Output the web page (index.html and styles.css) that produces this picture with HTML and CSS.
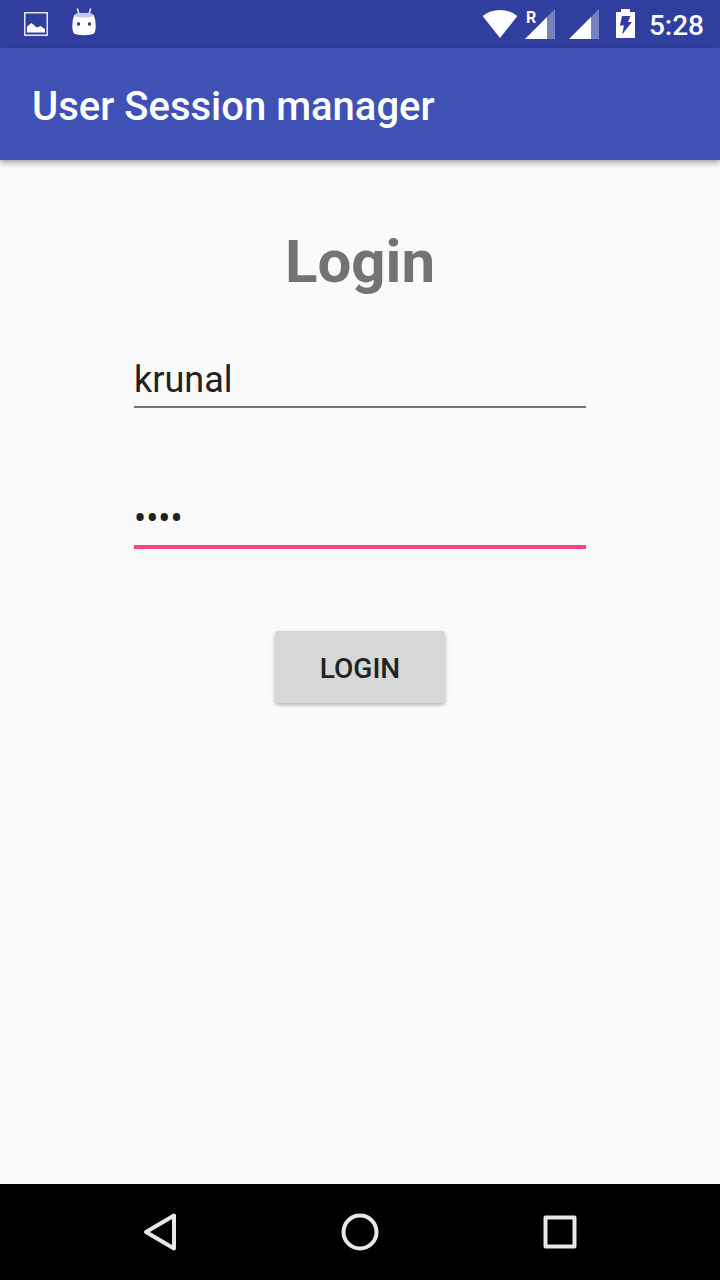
FILE: index.html
```html
<!DOCTYPE html>
<html lang="en">
<head>
<meta charset="utf-8">
<meta name="viewport" content="width=device-width, initial-scale=1">
<title>User Session manager</title>
<link rel="stylesheet" href="styles.css">
</head>
<body>
<div class="status-bar">
  <div class="notifications">
    <svg class="status-icon" width="24" height="40" viewBox="0 0 24 40" aria-hidden="true">
      <rect x="0.75" y="8.750" width="22.500" height="22.500" fill="none" stroke="#e4e6f4" stroke-width="1.500"/>
      <path d="M3 28.500v-6l4.500-3.500 4 3.500 1.500 1 3.500-1.500 4.500 3v3.500z" fill="#fff"/>
    </svg>
    <svg class="status-icon" width="24" height="40" viewBox="0 0 24 40" aria-hidden="true">
      <path d="M5.500 5l1.500 5M18.500 5l-1.500 5" stroke="#e8eaf6" stroke-width="1.500" stroke-linecap="round"/>
      <path d="M2 11.500Q4 9 8 9h8q4 0 6 2.500 1.700 5 1.700 10.500 0 6-2.200 7.800Q19.500 31.200 12 31.200T2.500 29.800Q.3 28 .3 22 .3 16.500 2 11.500z" fill="#fff"/>
      <path d="M2 11.500Q4 9 8 9h8q4 0 6 2.500-2 2-10 2t-10-2z" fill="#c5cae9"/>
      <rect x="5" y="18.500" width="3" height="3" fill="#303f9f"/><rect x="16" y="18.500" width="3" height="3" fill="#303f9f"/>
    </svg>
  </div>
  <div class="system-icons">
    <svg class="status-icon" width="36" height="40" viewBox="0 0 36 40" aria-hidden="true">
      <path d="M18 34L.6 12Q8 6 18 6t17.400 6z" fill="#fff"/>
    </svg>
    <div class="signal">
      <svg class="status-icon" width="30" height="40" viewBox="0 0 30 40" aria-hidden="true">
        <path d="M22 13l8-8v30h-8z" fill="#fff" fill-opacity=".35"/><path d="M0 35l22-22v22z" fill="#fff"/>
      </svg>
      <span class="roaming">R</span>
    </div>
    <svg class="status-icon signal-second" width="30" height="40" viewBox="0 0 30 40" aria-hidden="true">
      <path d="M22 13l8-8v30h-8z" fill="#fff" fill-opacity=".35"/><path d="M0 35l22-22v22z" fill="#fff"/>
    </svg>
    <svg class="status-icon battery" width="19" height="40" viewBox="0 0 19 40" aria-hidden="true">
      <path d="M5 5h9v3h5v26H0V8h5z" fill="#fff"/><path d="M6 12h8.500l-2.500 6h4L6 30.500l2-9H4z" fill="#303f9f"/>
    </svg>
    <time class="clock">5:28</time>
  </div>
</div>
<header class="app-bar"><h1 class="app-title">User Session manager</h1></header>
<main class="content">
  <form class="login-form">
    <h2 class="form-title">Login</h2>
    <input class="field" type="text" aria-label="Username" value="krunal" autocomplete="off">
    <input class="field field-active" type="password" aria-label="Password" value="1234" autocomplete="off">
    <button class="login-button" type="button">LOGIN</button>
  </form>
</main>
<nav class="nav-bar" aria-label="System">
  <button class="nav-button" type="button" aria-label="Back">
    <svg width="40" height="40" viewBox="0 0 40 40" fill="none" stroke="#e8e8e8" stroke-width="4" stroke-linejoin="round"><path d="M34 3.500v33L6 20z"/></svg>
  </button>
  <button class="nav-button" type="button" aria-label="Home">
    <svg width="40" height="40" viewBox="0 0 40 40" fill="none" stroke="#e8e8e8" stroke-width="4"><circle cx="20" cy="20" r="16.500"/></svg>
  </button>
  <button class="nav-button" type="button" aria-label="Recent apps">
    <svg width="40" height="40" viewBox="0 0 40 40" fill="none" stroke="#e8e8e8" stroke-width="4" stroke-linejoin="round"><path d="M5.500 5.500h29v29h-29z"/></svg>
  </button>
</nav>
</body>
</html>
```
FILE: styles.css
```css
* { box-sizing: border-box; }

body {
  margin: 0;
  min-height: 100vh;
  display: flex;
  flex-direction: column;
  background: #fafafa;
  font-family: Roboto, sans-serif;
}

.status-bar {
  display: flex;
  justify-content: space-between;
  height: 48px;
  padding: 4px 16px 4px 24px;
  background: #303f9f;
  color: #fff;
}

.notifications { display: flex; gap: 24px; }
.system-icons { display: flex; }
.status-icon { display: block; flex: none; }
.signal { position: relative; margin-left: 7px; }
.signal-second { margin-left: 14px; }
.battery { margin-left: 17px; }

.roaming {
  position: absolute;
  left: 1px;
  top: 6px;
  font-size: 16px;
  font-weight: 700;
  line-height: 16px;
}

.clock {
  margin-left: 14px;
  font-size: 28px;
  font-weight: 500;
  line-height: 44px;
}

.app-bar {
  padding: 35px 32px 29px;
  background: #3f51b5;
  color: #fff;
  box-shadow: 0 3px 6px rgba(0, 0, 0, .35);
}

.app-title {
  margin: 0;
  font-size: 40px;
  font-weight: 500;
  line-height: 48px;
}

.content {
  flex: 1;
  display: flex;
  justify-content: center;
  padding: 67px 32px;
}

.login-form {
  display: flex;
  flex-direction: column;
  align-items: center;
  width: 100%;
  max-width: 452px;
}

.form-title {
  margin: 0 0 62px;
  color: #737373;
  font-size: 60px;
  font-weight: 700;
  line-height: 70px;
}

.field {
  width: 100%;
  height: 49px;
  margin: 0 0 90px;
  padding: 0 0 5px;
  border: 0;
  border-bottom: 2px solid #757575;
  border-radius: 0;
  outline: 0;
  background: transparent;
  color: #212121;
  font-family: inherit;
  font-size: 36px;
  line-height: 42px;
}

.field-active {
  height: 51px;
  margin-bottom: 82px;
  border-bottom: 4px solid #ff4081;
}

.login-button {
  min-width: 170px;
  height: 72px;
  padding: 2px 16px 0;
  border: 0;
  border-radius: 4px;
  background: #d6d7d7;
  box-shadow: 0 2px 4px rgba(0, 0, 0, .3);
  color: #212121;
  font-family: inherit;
  font-size: 28px;
  font-weight: 500;
}

.nav-bar {
  display: flex;
  justify-content: center;
  height: 96px;
  background: #000;
}

.nav-button {
  flex: 0 1 200px;
  display: flex;
  align-items: center;
  justify-content: center;
  padding: 0;
  border: 0;
  background: transparent;
}
```
